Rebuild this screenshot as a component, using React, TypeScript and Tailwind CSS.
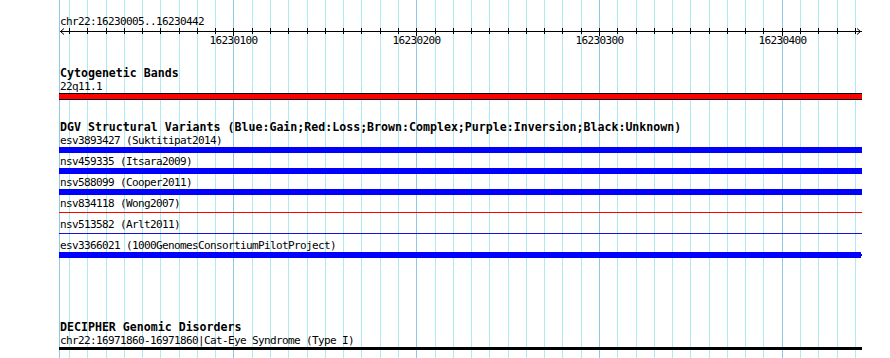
const MINOR_X = Array.from({ length: 44 }, (_, k) => Math.floor(69.5 + 18.275 * k));
const MAJOR_K = [9, 19, 29, 39];
const LABELS = [
  { k: 9, text: '16230100' },
  { k: 19, text: '16230200' },
  { k: 29, text: '16230300' },
  { k: 39, text: '16230400' },
];

const variants = [
  { label: 'esv3893427 (Suktitipat2014)', kind: 'gain' },
  { label: 'nsv459335 (Itsara2009)', kind: 'gain' },
  { label: 'nsv588099 (Cooper2011)', kind: 'gain' },
  { label: 'nsv834118 (Wong2007)', kind: 'lossLine' },
  { label: 'nsv513582 (Arlt2011)', kind: 'blueLine' },
  { label: 'esv3366021 (1000GenomesConsortiumPilotProject)', kind: 'gainEnd' },
];

const Grid = () => (
  <svg className="absolute inset-0" width={890} height={358} shapeRendering="crispEdges">
    <line x1={59.5} y1={0} x2={59.5} y2={358} stroke="#8ecae6" strokeWidth={1} />
    {MINOR_X.map((x, k) => (
      <line
        key={k}
        x1={x + 0.5}
        y1={0}
        x2={x + 0.5}
        y2={358}
        stroke={MAJOR_K.includes(k) ? '#8ecae6' : '#aeeaf0'}
        strokeWidth={1}
      />
    ))}
  </svg>
);

const Ruler = () => (
  <div className="relative h-[19px]">
    <svg className="absolute left-0 top-0" width={890} height={19} shapeRendering="crispEdges">
      <line x1={60} y1={3.5} x2={862} y2={3.5} stroke="#000" />
      {/* arrow heads */}
      <path d="M64 0.5 L60.5 3.5 L64 6.5" fill="none" stroke="#000" shapeRendering="auto" />
      <path d="M857 0.5 L860.5 3.5 L857 6.5" fill="none" stroke="#000" shapeRendering="auto" />
      {MINOR_X.map((x, k) => (
        <line
          key={k}
          x1={x + 0.5}
          y1={0}
          x2={x + 0.5}
          y2={MAJOR_K.includes(k) ? 8 : 6}
          stroke="#000"
        />
      ))}
    </svg>
    {LABELS.map((l) => (
      <div
        key={l.k}
        className="absolute top-[6px] w-[48px] text-center text-[11px] tracking-[-0.62px] leading-[13px]"
        style={{ left: MINOR_X[l.k] - 23.5 }}
      >
        {l.text}
      </div>
    ))}
  </div>
);

const Title = ({ children }: { children: React.ReactNode }) => (
  <div className="pl-[1px] text-[11.6px] leading-[13px] font-bold whitespace-nowrap">{children}</div>
);

const Label = ({ children }: { children: React.ReactNode }) => (
  <div className="pl-[1px] text-[11px] tracking-[-0.62px] leading-[13px] whitespace-nowrap">{children}</div>
);

const VariantBar = ({ kind }: { kind: string }) => {
  if (kind === 'lossLine')
    return (
      <div className="h-[6px] pt-[2px]">
        <div className="w-[803px] h-[1px] bg-[#ff0000]" />
      </div>
    );
  if (kind === 'blueLine')
    return (
      <div className="h-[6px] pt-[2px]">
        <div className="w-[803px] h-[1px] bg-[#1414e0]" />
      </div>
    );
  if (kind === 'gainEnd')
    return (
      <div className="h-[6px] flex items-center">
        <div className="w-[802px] h-[6px] bg-[#0000ff]" />
        <div className="w-[1px] h-[2px] bg-[#0000ff]" />
      </div>
    );
  return <div className="w-[803px] h-[6px] bg-[#0000ff]" />;
};

export default function App() {
  return (
    <div className="relative w-[890px] h-[358px] overflow-hidden bg-white text-black font-['DejaVu_Sans_Mono',monospace]">
      <Grid />
      <div className="relative">
        {/* Position */}
        <div className="pt-[15px] pl-[60px] text-[11px] tracking-[-0.62px] leading-[13px]">chr22:16230005..16230442</div>
        <Ruler />

        <div className="pl-[59px]">
          {/* Cytogenetic bands */}
          <div className="mt-[20px]">
            <Title>Cytogenetic Bands</Title>
            <Label>22q11.1</Label>
            <div className="w-[803px] h-[7px] bg-[#ff0000] border-y border-black" />
          </div>

          {/* DGV */}
          <div className="mt-[21px]">
            <Title>DGV Structural Variants (Blue:Gain;Red:Loss;Brown:Complex;Purple:Inversion;Black:Unknown)</Title>
            {variants.map((v) => (
              <div key={v.label} className="mb-[2px]">
                <Label>{v.label}</Label>
                <VariantBar kind={v.kind} />
              </div>
            ))}
          </div>

          {/* DECIPHER */}
          <div className="mt-[63px]">
            <Title>DECIPHER Genomic Disorders</Title>
            <Label>chr22:16971860-16971860|Cat-Eye Syndrome (Type I)</Label>
            <div className="w-[803px] h-[3px] bg-black" />
          </div>
        </div>
      </div>
    </div>
  );
}
